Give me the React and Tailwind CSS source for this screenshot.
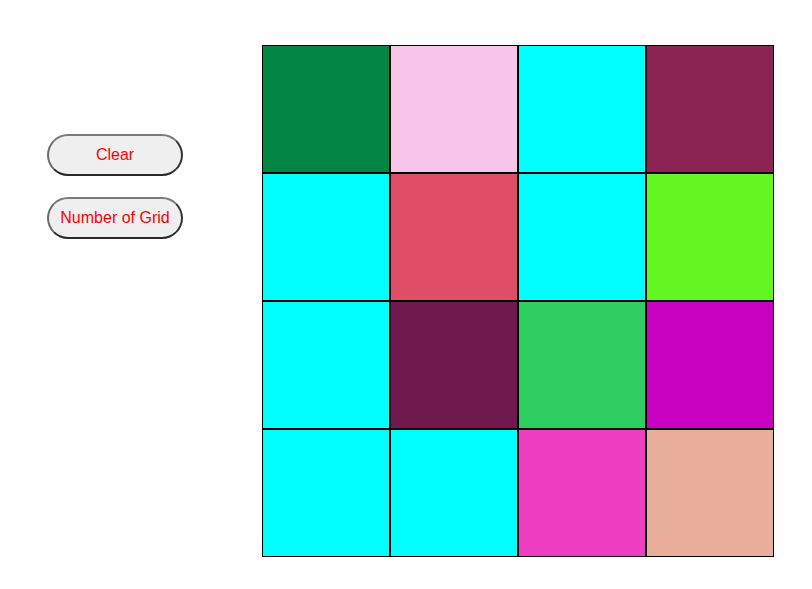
const COLORS = [
  ['#018643', '#f7c5ea', '#00ffff', '#8b2453'],
  ['#00ffff', '#df4e66', '#00ffff', '#62f723'],
  ['#00ffff', '#6e1a51', '#2dcf62', '#c800c0'],
  ['#00ffff', '#00ffff', '#f03ec2', '#e9ae9b'],
]

const btn =
  'h-[42px] w-[136px] rounded-full border-2 border-t-[#7a7a7a] border-l-[#6a6a6a] border-r-[#333] border-b-[#2a2a2a] bg-[#efefef] text-[16px] text-[#ff0000] font-["Liberation_Sans",Arial,sans-serif]'

export default function App() {
  return (
    <div className="flex min-h-[589px] w-[812px] bg-white">
      <div className="flex w-[262px] flex-col gap-[21px] pl-[47px] pt-[134px]">
        <button className={btn}>Clear</button>
        <button className={btn}>Number of Grid</button>
      </div>
      <div className="pt-[45px]">
        <div className="grid w-[512px] grid-cols-4">
          {COLORS.flat().map((c, i) => (
            <div key={i} className="h-[128px] w-[128px] border border-black" style={{ backgroundColor: c }} />
          ))}
        </div>
      </div>
    </div>
  )
}
